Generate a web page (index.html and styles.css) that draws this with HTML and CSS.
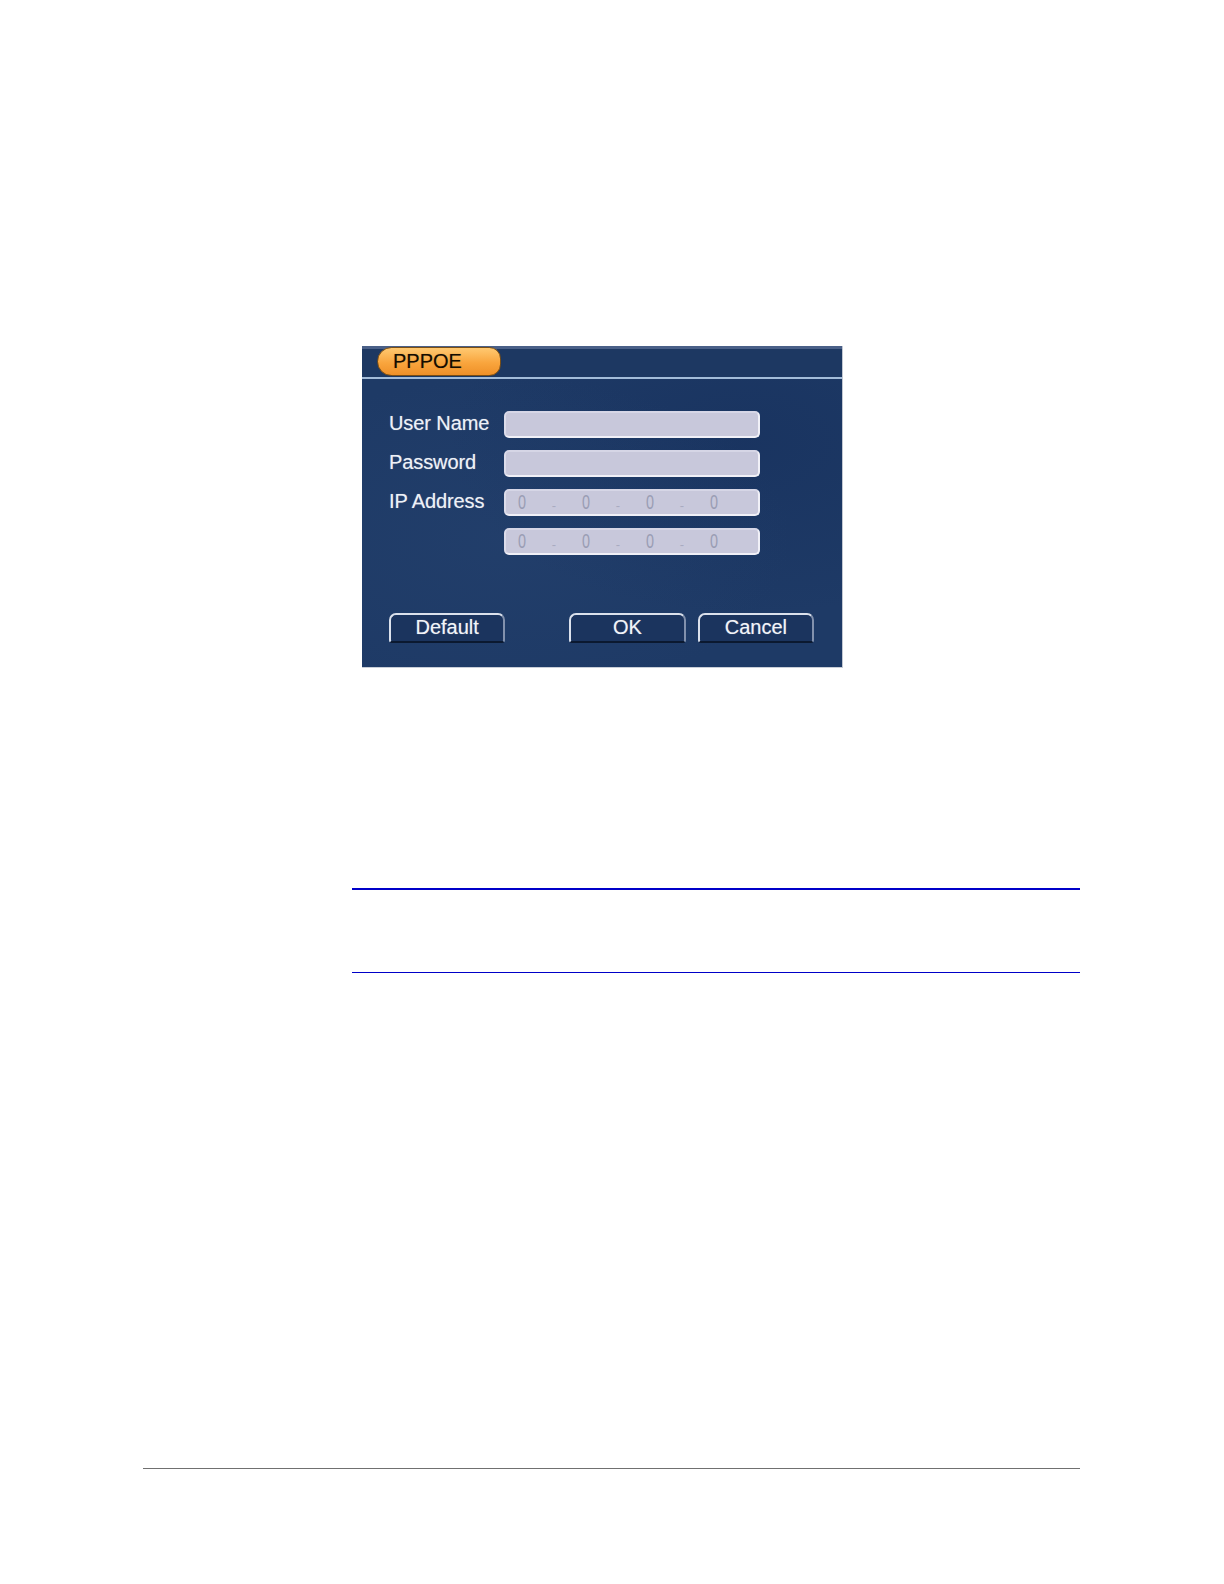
FILE: index.html
```html
<!DOCTYPE html>
<html>
<head>
<meta charset="utf-8">
<link rel="stylesheet" href="styles.css">
</head>
<body>
<div class="page">
  <div class="figure">
    <div class="dialog">
      <div class="header">
        <div class="tab">PPPOE</div>
      </div>
      <div class="body">
        <div class="form">
          <div class="label">User Name</div>
          <div class="field"></div>
          <div class="label">Password</div>
          <div class="field"></div>
          <div class="label">IP Address</div>
          <div class="field ip"><span>0</span><i>-</i><span>0</span><i>-</i><span>0</span><i>-</i><span>0</span></div>
          <div class="label"></div>
          <div class="field ip"><span>0</span><i>-</i><span>0</span><i>-</i><span>0</span><i>-</i><span>0</span></div>
        </div>
        <div class="buttons">
          <div class="btn">Default</div>
          <div class="spacer"></div>
          <div class="btn">OK</div>
          <div class="btn">Cancel</div>
        </div>
      </div>
    </div>
  </div>
  <div class="note">
    <div class="rule-top"></div>
    <div class="note-body"></div>
    <div class="rule-bottom"></div>
  </div>
  <div class="footer-rule"></div>
</div>
</body>
</html>
```
FILE: styles.css
```css
html, body {
  margin: 0;
  padding: 0;
  background: #ffffff;
}
.page {
  width: 1224px;
  height: 1584px;
  font-family: "Liberation Sans", Arial, sans-serif;
}
.figure {
  padding: 346px 0 0 362px;
}
.dialog {
  width: 481px;
  height: 322px;
  box-sizing: border-box;
  background: #1e3a66;
  background-image:
    radial-gradient(ellipse at 30% 60%, rgba(40,70,115,0.35), rgba(0,0,0,0) 60%),
    radial-gradient(ellipse at 80% 30%, rgba(20,45,90,0.45), rgba(0,0,0,0) 55%);
  display: flex;
  flex-direction: column;
  border-right: 1px solid #c2c8d2;
  border-bottom: 1px solid #c8ced8;
}
.header {
  height: 33px;
  box-sizing: border-box;
  border-top: 3px solid #4a6088;
  border-bottom: 2px solid #a3bcd9;
  background: #1d3862;
  display: flex;
  align-items: flex-start;
  padding-left: 15px;
}
.tab {
  margin-top: -2px;
  height: 29px;
  width: 124px;
  box-sizing: border-box;
  border: 1px solid #7a4e14;
  border-radius: 15px 12px 12px 15px;
  background: linear-gradient(#ffc971, #f9a53d 55%, #ef9028);
  color: #140c00;
  font-size: 20px;
  line-height: 27px;
  padding-left: 15px;
  text-shadow: 0 0 1px rgba(0,0,0,0.35);
}
.body {
  flex: 1;
  display: flex;
  flex-direction: column;
  padding: 32px 28px 24px 27px;
}
.form {
  display: grid;
  grid-template-columns: 115px 256px;
  grid-auto-rows: 27px;
  row-gap: 12px;
}
.label {
  color: #eef1f7;
  font-size: 20px;
  line-height: 20px;
  padding-top: 2px;
  letter-spacing: -0.1px;
  text-shadow: 0 0 1px rgba(255,255,255,0.45);
}
.field {
  box-sizing: border-box;
  background: #c8c8db;
  border: 2px solid #dcdcea;
  border-top-color: #d6d6e6;
  border-right-color: #f0f0f7;
  border-bottom-color: #f0f0f7;
  border-radius: 5px;
}
.field.ip {
  display: flex;
  align-items: center;
  padding-left: 10px;
  color: #9a9db4;
  font-size: 20px;
}
.field.ip span {
  width: 12px;
  text-align: center;
  transform: scaleX(0.72);
}
.field.ip i {
  font-style: normal;
  width: 52px;
  text-align: center;
  font-size: 13px;
  color: #a9abc0;
  padding-top: 5px;
}
.buttons {
  margin-top: auto;
  display: flex;
  gap: 12px;
}
.spacer {
  width: 41px;
}
.btn {
  width: 119px;
  height: 30px;
  box-sizing: border-box;
  border: 2px solid;
  border-color: #dbe1ec #8291ad #0b1930 #dbe1ec;
  border-radius: 7px 7px 3px 3px;
  background: #1b345e;
  color: #f2f4f8;
  font-size: 20px;
  line-height: 25px;
  text-align: center;
  text-shadow: 0 0 1px rgba(255,255,255,0.45);
}
.note {
  margin: 220px 0 0 352px;
  width: 728px;
}
.rule-top {
  height: 2px;
  background: #0000c8;
}
.note-body {
  height: 82px;
}
.rule-bottom {
  height: 1px;
  background: #0000c8;
}
.footer-rule {
  margin: 495px 0 0 143px;
  width: 937px;
  height: 1px;
  background: #707070;
}
```
